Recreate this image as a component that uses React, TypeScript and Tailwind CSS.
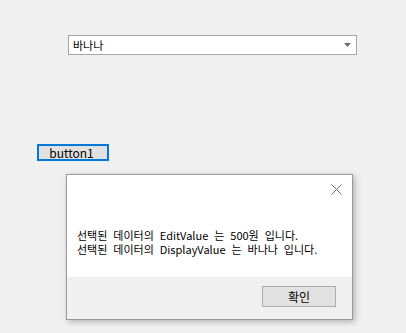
export default function App() {
  const font = { fontFamily: '"Noto Sans CJK KR", "Liberation Sans", sans-serif' };
  return (
    <div className="relative w-[406px] h-[333px] bg-[#f0f0f0] overflow-hidden" style={font}>
      {/* ComboBox */}
      <div className="ml-[68px] pt-[35px]">
        <div className="flex items-center w-[289px] h-[20px] bg-white border border-[#a5a5a5] pl-[4px] pr-[4px]">
          <span className="flex-1 text-[11px] leading-none text-black">바나나</span>
          <svg width="7" height="4" viewBox="0 0 7 4" className="mr-[1px]">
            <path d="M0 0h7L3.5 4z" fill="#707070" />
          </svg>
        </div>
      </div>

      {/* button1 */}
      <div className="ml-[37px] mt-[89px]">
        <button className="flex items-center justify-center w-[72px] h-[17px] pr-[3px] bg-[#e1e1e1] border-2 border-[#0078d7] text-[12px] leading-none text-black">
          button1
        </button>
      </div>

      {/* MessageBox */}
      <div className="absolute left-[66px] top-[174px] w-[287px] h-[146px] flex flex-col border border-[#9a9a9a] bg-white shadow-[2px_2px_6px_rgba(0,0,0,0.25)]">
        <div className="flex-1 flex flex-col">
          <div className="flex justify-end pt-[9px] pr-[10px]">
            <svg width="11" height="11" viewBox="0 0 11 11">
              <path d="M0.5 0.5l10 10M10.5 0.5l-10 10" stroke="#6f6f6f" strokeWidth="1" />
            </svg>
          </div>
          <div className="pl-[10px] pt-[33px] text-[11px] leading-[14px] text-black [word-spacing:3.5px]">
            <div>선택된 데이터의 EditValue 는 500원 입니다.</div>
            <div>선택된 데이터의 DisplayValue 는 바나나 입니다.</div>
          </div>
        </div>
        <div className="h-[42px] bg-[#f0f0f0] flex justify-end items-start pt-[9px] pr-[16px]">
          <button className="flex items-center justify-center w-[74px] h-[21px] bg-[#e1e1e1] border border-[#adadad] text-[12px] leading-none text-black">
            확인
          </button>
        </div>
      </div>
    </div>
  );
}
